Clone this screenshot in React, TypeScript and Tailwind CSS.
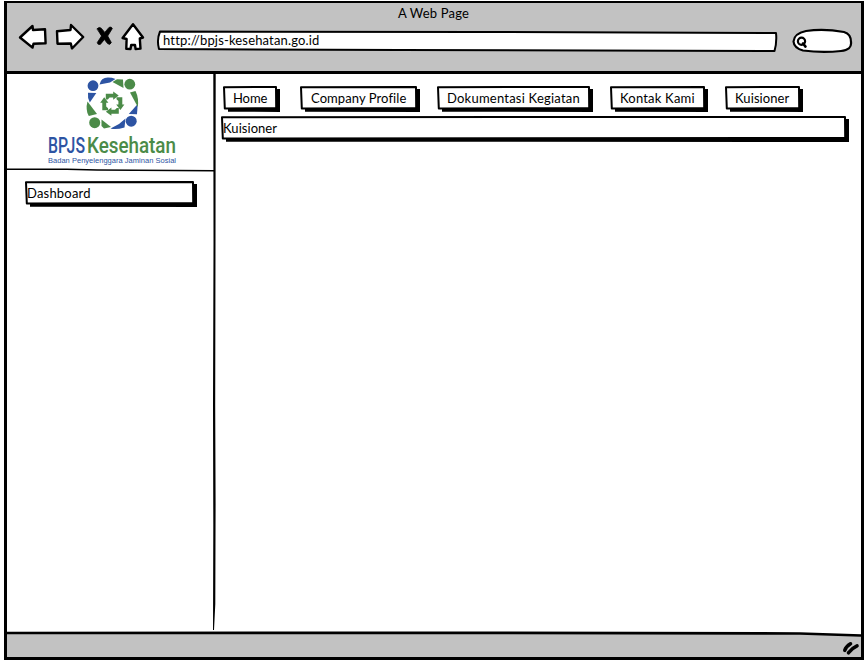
import React from "react";

function NavIcons() {
  return (
    <svg className="h-[32px] w-[130px] shrink-0" viewBox="17 22 130 32" fill="#fff" stroke="#000" strokeWidth="2.4" strokeLinejoin="round" strokeLinecap="round">
      <path d="M20 37.5 L32.5 26 L33 30 L45 29.2 L45.6 43.3 L33.5 43.7 L32.5 47.6 Z" />
      <path d="M57 31.2 L70.5 30 L71 25 L83.2 37 L72 48.5 L70.8 43.5 L57.5 43.7 Z" />
      <path d="M97.2 28.6 Q99.5 26.4 101.2 28.2 L104.8 32.4 L109 27.4 Q111.5 26.2 112.3 28.5 L107.7 36 L111.3 42.5 Q110 45.6 107.6 43.6 L104.4 39.5 L100.3 44.4 Q97.4 45 97.3 42.5 L101.4 36.2 Z" fill="#000" strokeWidth="0.8" />
      <path d="M133 24.2 L143 37.5 L139.8 38.5 L140.5 48.6 L135.6 49 L135 45 L131.2 45 L130.5 49 L126.3 48.8 L126.6 39 L122.6 38 Z" strokeWidth="2.4" />
    </svg>
  );
}

const TURN = "M105.8 99.5 V93.7 H113.2 V91.6 L118.7 95.6 L113.2 99.8 V97.6 H109.6 L107.8 99.5Z";

function Logo() {
  return (
    <svg className="block h-[94px] w-[208px]" viewBox="7 74 208 94">
      <g fill="#2d54a3">
        <circle cx="93" cy="85.7" r="5.4" />
        <circle cx="131.2" cy="121.2" r="5.5" />
        <path d="M99.5 84.5 Q101 77.5 108 77.6 Q112 77.6 115.5 79 L110 82.5 Z" />
        <path d="M88 92.8 L96.3 93 L89.8 102.5 Q87.3 98 88 92.8Z" />
        <path d="M125.5 118.5 L124.5 127.5 Q116 130 110.5 128.5 L119 124Z" />
        <path d="M137.7 104 L137 114.3 L128.8 114 Z" />
      </g>
      <g fill="#4b8b48">
        <circle cx="129.8" cy="84.2" r="5.4" />
        <circle cx="94.7" cy="122.7" r="5.5" />
        <path d="M112.5 82 L117 79.2 L123 79.5 L123.5 88 Z" />
        <path d="M130 92.5 L135.5 91 Q139 98 137.8 107 Z" />
        <path d="M87.5 101.5 L97 114 L88.8 116 Q85.2 110 87.5 101.5Z" />
        <path d="M101.5 119.5 L111 127 L104 128.5 L101.5 126Z" />
        <path d={TURN} />
        <path d={TURN} transform="rotate(90 112.3 103.7)" />
        <path d={TURN} transform="rotate(180 112.3 103.7)" />
        <path d={TURN} transform="rotate(270 112.3 103.7)" />
      </g>
      <g fontFamily="Roboto, sans-serif" fontSize="21.5" fontWeight="500">
        <text x="48" y="152.8" textLength="37" lengthAdjust="spacingAndGlyphs" fill="#2d54a3">BPJS</text>
        <text x="87" y="152.8" textLength="89" lengthAdjust="spacingAndGlyphs" fill="#4b8b48">Kesehatan</text>
      </g>
      <text x="48" y="162.8" fontFamily="'Liberation Sans', sans-serif" fontSize="7.5" textLength="128" lengthAdjust="spacing" fill="#2d54a3">Badan Penyelenggara Jaminan Sosial</text>
    </svg>
  );
}

/* Hand-drawn frame: a slightly uneven outline over an offset solid shadow. */
function Sketch({ w, h, className, children }: { w: number; h: number; className: string; children: React.ReactNode }) {
  return (
    <div className={"relative flex shrink-0 items-center whitespace-nowrap " + className}>
      <svg className="absolute inset-0 h-full w-full" viewBox={`0 0 ${w} ${h}`}>
        <path d={`M5 4 L${w} 3 V${h} L5 ${h - 0.3} Z`} fill="#000" />
        <path d={`M1 1.2 L${w - 4} 1 L${w - 3.8} ${h - 4} L1.8 ${h - 3.6} Z`} fill="#fff" stroke="#000" strokeWidth="2" strokeLinejoin="round" />
      </svg>
      <span className="relative">{children}</span>
    </div>
  );
}

export default function App() {
  return (
    <div className="h-[661px] w-[865px] overflow-hidden bg-white pl-[4px] pt-px font-['Lato','Noto_Sans',sans-serif] text-[13px] leading-[16px] text-black">
      <div className="flex h-[659px] w-[860px] flex-col border-[3px] border-t-[2.5px] border-black bg-white">
        <header className="h-[71px] shrink-0 border-b-[3px] border-black bg-[#c2c2c2]">
          <div className="h-[18px] pr-px pt-[2px] text-center tracking-[0.18px]">A Web Page</div>
          <div className="flex h-[34px] items-center pl-[10px]">
            <NavIcons />
            <div className="relative ml-[9px] mt-[6px] flex h-[22px] w-[622px] shrink-0 items-center">
              <svg className="absolute inset-0 h-full w-full" viewBox="156 30 622 22">
                <path d="M160 31.5 L480 32 L776 33 Q777 42 774.5 51 L400 50 L159 49 Q156.5 40 160 31.5Z" fill="#fff" stroke="#000" strokeWidth="2" strokeLinejoin="round" />
              </svg>
              <span className="relative -top-px pl-[7px] tracking-[0.16px]">http://bpjs-kesehatan.go.id</span>
            </div>
            <svg className="ml-[12px] mt-[6px] h-[26px] w-[64px] shrink-0" viewBox="790 28 64 26">
              <path d="M806 31 Q824 28.5 844 32 Q851 34 851 42 Q852 50 841 51 Q822 53 803 50.5 Q794 48 793.5 41.5 Q794 33.5 806 31Z" fill="#fff" stroke="#000" strokeWidth="2.2" />
              <circle cx="801.5" cy="41.2" r="3.6" fill="none" stroke="#000" strokeWidth="2.2" />
              <path d="M803 43.5 L805.5 46.6" stroke="#000" strokeWidth="2.6" strokeLinecap="round" />
            </svg>
          </div>
        </header>
        <div className="flex min-h-0 flex-1">
          <aside className="w-[206px] shrink-0">
            <Logo />
            <svg className="block h-[4px] w-[207px]" viewBox="0 0 207 4">
              <path d="M0 1.3 L60 1.3 L90 2.1 L207 2.7" fill="none" stroke="#000" strokeWidth="1.5" />
            </svg>
            <div className="pl-[18px] pt-[9px]">
              <Sketch w={172} h={26} className="h-[26px] w-[172px] pb-[3px] pl-[2px] tracking-[0.2px]">Dashboard</Sketch>
            </div>
          </aside>
          <svg className="h-[556px] w-[3px] shrink-0" viewBox="0 0 3 556">
            <path d="M0.3 0 H2.7 L2.5 170 L2.2 330 L2.6 430 L2.3 530 L1 556 H0 L0.3 450 L0 330 L0.5 170Z" />
          </svg>
          <main className="min-w-0 flex-1 pl-[5px] pt-[12px]">
            <nav className="flex h-[27px] pl-[2px]">
              <Sketch w={57} h={26} className="mr-[20px] h-[26px] w-[57px] pb-[3px] pl-[10px] tracking-[-0.1px]">Home</Sketch>
              <Sketch w={120} h={26} className="mr-[17px] h-[26px] w-[120px] pb-[3px] pl-[11px] tracking-[0.08px]">Company Profile</Sketch>
              <Sketch w={156} h={26} className="mr-[17px] h-[26px] w-[156px] pb-[3px] pl-[10px] tracking-[0.22px]">Dokumentasi Kegiatan</Sketch>
              <Sketch w={98} h={26} className="mr-[17px] h-[26px] w-[98px] pb-[3px] pl-[10px] tracking-[0.2px]">Kontak Kami</Sketch>
              <Sketch w={78} h={26} className="h-[26px] w-[78px] pb-[3px] pl-[10px] tracking-[0.08px]">Kuisioner</Sketch>
            </nav>
            <div className="pt-[3px]">
              <Sketch w={628} h={26} className="h-[26px] w-[628px] pb-[3px] pl-[2px] tracking-[0.05px]">Kuisioner</Sketch>
            </div>
          </main>
        </div>
        <footer className="h-[26px] shrink-0">
          <svg className="block h-[26px] w-[854px]" viewBox="7 631 854 26">
            <path d="M7 633 L440 633.5 L780 633 L861 635.5 V657 H7Z" fill="#c2c2c2" />
            <path d="M7 633 L430 632.8 L800 633.5 L861 635.5" fill="none" stroke="#000" strokeWidth="2.7" />
            <path d="M844.8 650.3 Q846 646.5 850.5 643.8 M848.5 652.8 Q852 648 857 645.8" fill="none" stroke="#000" strokeWidth="3.6" strokeLinecap="round" />
          </svg>
        </footer>
      </div>
    </div>
  );
}
